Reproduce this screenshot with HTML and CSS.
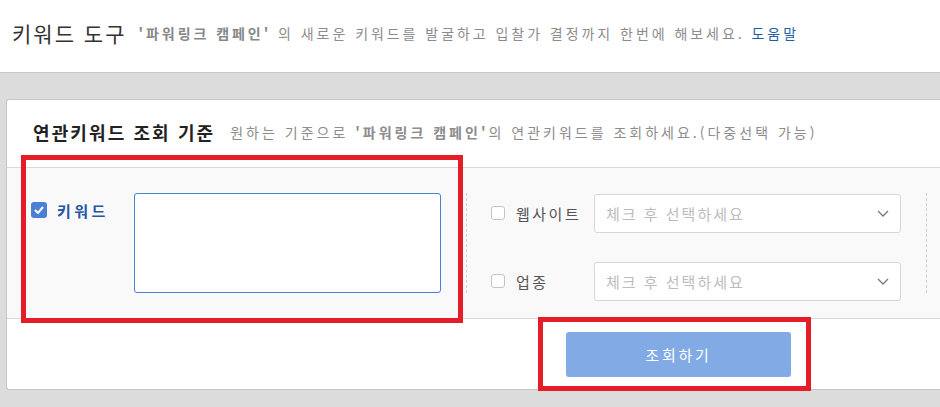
FILE: index.html
```html
<!DOCTYPE html>
<html lang="ko">
<head>
    <meta charset="UTF-8">
    <title>키워드 도구</title>
    <link rel="stylesheet" href="styles.css">
</head>
<body>
    <div class="top">
        <h1 class="top-title">키워드 도구</h1>
        <p class="top-desc"><b>'파워링크 캠페인'</b> 의 새로운 키워드를 발굴하고 입찰가 결정까지 한번에 해보세요. <a href="#" class="help">도움말</a></p>
    </div>
    <div class="page">
        <div class="card">
            <div class="card-head">
                <h2 class="card-title">연관키워드 조회 기준</h2>
                <p class="card-desc">원하는 기준으로 <b>'파워링크 캠페인'</b>의 연관키워드를 조회하세요.(다중선택 가능)</p>
            </div>
            <div class="filter">
                <div class="group group-keyword">
                    <label class="check-label on">
                        <span class="box checked">
                            <svg width="10" height="8" viewBox="0 0 10 8"><path d="M1 4l3 3 5-6" fill="none" stroke="#fff" stroke-width="2"/></svg>
                        </span>
                        키워드
                    </label>
                    <textarea class="keyword-input"></textarea>
                </div>
                <div class="divider"></div>
                <div class="group group-select">
                    <div class="row">
                        <label class="check-label"><span class="box"></span>웹사이트</label>
                        <div class="select">
                            <span>체크 후 선택하세요</span>
                            <svg width="12" height="7" viewBox="0 0 12 7"><path d="M1 1l5 5 5-5" fill="none" stroke="#777" stroke-width="1.3"/></svg>
                        </div>
                    </div>
                    <div class="row">
                        <label class="check-label"><span class="box"></span>업종</label>
                        <div class="select">
                            <span>체크 후 선택하세요</span>
                            <svg width="12" height="7" viewBox="0 0 12 7"><path d="M1 1l5 5 5-5" fill="none" stroke="#777" stroke-width="1.3"/></svg>
                        </div>
                    </div>
                </div>
                <div class="divider"></div>
            </div>
            <div class="actions">
                <button class="search-btn">조회하기</button>
            </div>
        </div>
        <div class="mark mark-filter"></div>
        <div class="mark mark-button"></div>
    </div>
</body>
</html>
```

FILE: styles.css
```css
body {
    margin: 0;
    background: #dcdcdc;
    font-family: "Noto Sans CJK KR", "Noto Sans", sans-serif;
    overflow: hidden;
    width: 940px;
    height: 407px;
}
.top {
    background: #fff;
    border-bottom: 1px solid #c9c9c9;
    display: flex;
    align-items: center;
    padding: 0 0 6px 12px;
    box-sizing: border-box;
    height: 73px;
    white-space: nowrap;
}
.top-title {
    margin: 0;
    font-size: 21px;
    font-weight: normal;
    color: #333;
    letter-spacing: 2px;
}
.top-desc {
    margin: 0 0 0 12px;
    font-size: 14px;
    color: #8c8c8c;
    letter-spacing: 2.95px;
}
.top-desc b {
    color: #888;
}
.help {
    color: #1f5fa6;
    text-decoration: none;
}
.page {
    position: relative;
    padding: 26px 0 0 6px;
}
.card {
    width: 940px;
    background: #fff;
    border: 1px solid #c6c6c6;
    border-right: none;
    border-radius: 3px 0 0 3px;
    overflow: hidden;
}
.card-head {
    height: 67px;
    display: flex;
    align-items: center;
    padding: 0 0 4px 26px;
    box-sizing: border-box;
    white-space: nowrap;
}
.card-title {
    margin: 0;
    font-size: 18px;
    color: #222;
    letter-spacing: 2.1px;
}
.card-desc {
    margin: 0 0 0 15px;
    font-size: 14px;
    color: #8c8c8c;
    letter-spacing: 3px;
}
.filter {
    display: flex;
    height: 152px;
    background: #f9f9f9;
    border-top: 1px solid #d9d9d9;
    border-bottom: 1px solid #d9d9d9;
    padding-top: 25px;
    box-sizing: border-box;
}
.group {
    display: flex;
    flex-shrink: 0;
}
.group-keyword {
    padding-left: 24px;
    width: 435px;
}
.check-label {
    display: flex;
    align-items: center;
    height: 38px;
    font-size: 15px;
    color: #555;
    letter-spacing: 2.5px;
    align-self: flex-start;
}
.check-label.on {
    color: #2456a4;
    font-weight: bold;
    width: 103px;
    height: 34px;
    letter-spacing: 3.5px;
}
.box {
    width: 14px;
    height: 14px;
    border: 1px solid #c4c4c4;
    border-radius: 3px;
    background: #fff;
    margin-right: 11px;
    display: flex;
    align-items: center;
    justify-content: center;
    box-sizing: border-box;
}
.box.checked {
    width: 16px;
    height: 16px;
    border: none;
    background: #4a7fd6;
    margin-right: 10px;
}
.keyword-input {
    width: 307px;
    height: 100px;
    border: 1px solid #4a7fd6;
    border-radius: 3px;
    box-sizing: border-box;
    resize: none;
    margin: 0;
}
.divider {
    flex-shrink: 0;
    width: 0;
    height: 100px;
    border-left: 1px dashed #cfcfcf;
    margin-right: 24px;
}
.group-select {
    flex-direction: column;
    gap: 29px;
    width: 435px;
    padding-top: 1px;
}
.row {
    display: flex;
}
.row .check-label {
    width: 103px;
}
.select {
    width: 307px;
    height: 39px;
    border: 1px solid #d6d6d6;
    border-radius: 3px;
    background: #fff;
    box-sizing: border-box;
    display: flex;
    align-items: center;
    justify-content: space-between;
    padding: 0 11px 0 11px;
    font-size: 15px;
    color: #bcbcbc;
    letter-spacing: 2px;
}
.actions {
    height: 70px;
    padding: 13px 0 0 559px;
    box-sizing: border-box;
}
.search-btn {
    width: 225px;
    height: 45px;
    border: none;
    border-radius: 3px;
    background: #82aae4;
    color: #fff;
    font-family: inherit;
    font-size: 15px;
    letter-spacing: 2.8px;
}
.mark {
    position: absolute;
    border: 5px solid #e41d27;
}
.mark-filter {
    left: 21px;
    top: 82px;
    width: 432px;
    height: 158px;
}
.mark-button {
    left: 538px;
    top: 244px;
    width: 263px;
    height: 64px;
}
```
